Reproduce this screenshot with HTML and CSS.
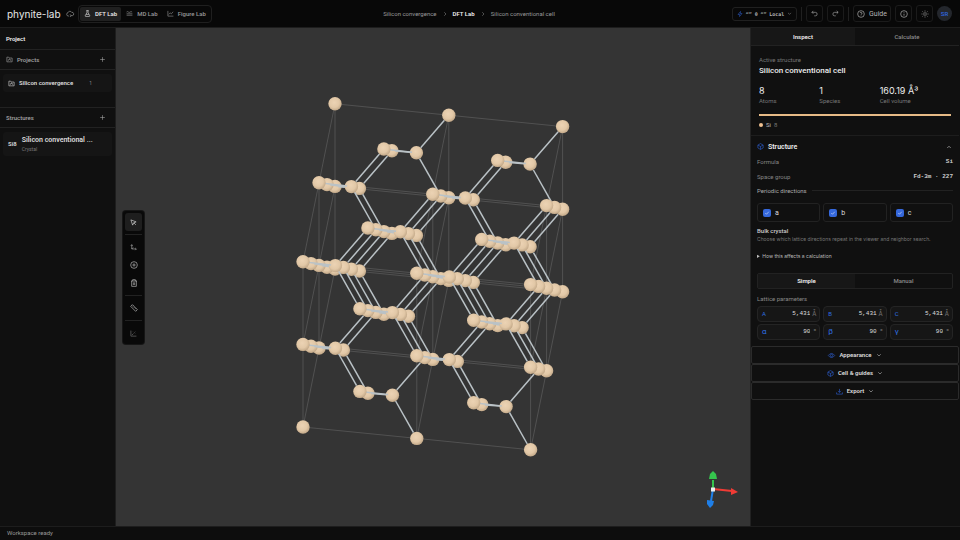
FILE: index.html
```
<!DOCTYPE html>
<html lang="en">
<head>
<meta charset="utf-8">
<title>phynite-lab</title>
<link rel="stylesheet" href="styles.css">
</head>
<body>
<svg class="defs" aria-hidden="true">
  <symbol id="folder" viewBox="0 0 24 24"><path d="M3 20V4h6l3 3h9v13zM8 16v-3l4-3 4 3v3M12 10v3"/></symbol>
  <symbol id="plus" viewBox="0 0 24 24"><path d="M12 4v16M4 12h16"/></symbol>
  <symbol id="down" viewBox="0 0 24 24"><path d="M5 9l7 7 7-7"/></symbol>
  <symbol id="up" viewBox="0 0 24 24"><path d="M5 16l7-7 7 7"/></symbol>
  <symbol id="right" viewBox="0 0 24 24"><path d="M9 5l7 7-7 7"/></symbol>
  <symbol id="cube" viewBox="0 0 24 24"><path d="M12 2l9 5v10l-9 5-9-5V7zM3 7l9 5 9-5M12 12v10"/></symbol>
  <symbol id="check" viewBox="0 0 24 24"><path d="M5 12l5 5 9-10"/></symbol>
</svg>
<div class="app">
  <header class="top">
    <div class="brand"><span class="logo">phynite-lab</span>
      <svg class="ic ic8" viewBox="0 0 24 24"><path d="M9 18H7a5 5 0 0 1-1-9.900A6 6 0 0 1 17 7a5 5 0 0 1 2 10l-5 0M12 13l3 4-3 4"/></svg>
    </div>
    <nav class="labs">
      <button class="lab on"><svg class="ic ic7" viewBox="0 0 24 24"><path d="M8 2h8M10 2v7L4 20q0 2 2 2h12q2 0 2-2L14 9V2M7 15h10"/></svg>DFT Lab</button>
      <button class="lab"><svg class="ic ic7" viewBox="0 0 24 24"><path d="M2 7q3-3 6 0t6 0 7 0M2 13h20M2 18h20"/></svg>MD Lab</button>
      <button class="lab"><svg class="ic ic7" viewBox="0 0 24 24"><path d="M3 3v18h19M6 15l5-5 4 3 6-7"/></svg>Figure Lab</button>
    </nav>
    <nav class="crumbs"><a href="#">Silicon convergence</a><svg class="ic ic6"><use href="#right"/></svg><a class="cur" href="#">DFT Lab</a><svg class="ic ic6"><use href="#right"/></svg><a href="#">Silicon conventional cell</a></nav>
    <div class="tools">
      <button class="pill"><svg class="ic ic6 blue" viewBox="0 0 24 24"><path d="M14 2L4 14h7l-1 8L20 10h-7z"/></svg><span>“” 0</span><span>“”</span><span>Local</span><svg class="ic ic5"><use href="#down"/></svg></button>
      <span class="sep"></span>
      <button class="sq" aria-label="Undo"><svg class="ic ic7" viewBox="0 0 24 24"><path d="M8 3L3 8l5 5M3 8h12a6 6 0 0 1 0 12h-4"/></svg></button>
      <button class="sq" aria-label="Redo"><svg class="ic ic7" viewBox="0 0 24 24"><path d="M16 3l5 5-5 5M21 8H9a6 6 0 0 0 0 12h4"/></svg></button>
      <span class="sep"></span>
      <button class="guide"><svg class="ic ic8" viewBox="0 0 24 24"><circle cx="12" cy="12" r="10"/><path d="M9 9a3 3 0 1 1 3 4v1M12 17v1"/></svg>Guide</button>
      <button class="sq" aria-label="About"><svg class="ic ic8" viewBox="0 0 24 24"><circle cx="12" cy="12" r="10"/><path d="M12 6v2M12 11v6"/></svg></button>
      <button class="sq" aria-label="Theme"><svg class="ic ic8 dim" viewBox="0 0 24 24"><circle cx="12" cy="12" r="4"/><path d="M12 1v4M12 19v4M1 12h4M19 12h4M4 4l3 3M17 17l3 3M4 20l3-3M17 7l3-3"/></svg></button>
      <button class="avatar">SR</button>
    </div>
  </header>

  <aside class="left">
    <h1 class="side-title">Project</h1>
    <div class="side-head"><svg class="ic ic7"><use href="#folder"/></svg><span>Projects</span><button class="add" aria-label="Add project"><svg class="ic ic7"><use href="#plus"/></svg></button></div>
    <div class="side-list projects"><a class="item" href="#"><svg class="ic ic7"><use href="#folder"/></svg><b>Silicon convergence</b><span class="count">1</span></a></div>
    <div class="side-head"><span>Structures</span><button class="add" aria-label="Add structure"><svg class="ic ic7"><use href="#plus"/></svg></button></div>
    <div class="side-list"><a class="item tall" href="#"><b>Si8</b><span class="stack"><b>Silicon conventional ...</b><small>Crystal</small></span></a></div>
  </aside>

  <main class="view">
    <svg class="scene" id="scene" viewBox="116 28 634 498" role="img" aria-label="Silicon supercell">
      <defs><radialGradient id="ball" cx=".44" cy=".4" r=".62"><stop offset="0" stop-color="#ecd3b4"/><stop offset=".6" stop-color="#e2c8a7"/><stop offset="1" stop-color="#c0a686"/></radialGradient></defs>
      <g id="cells"></g><g id="atoms"></g>
      <g class="gizmo">
        <path stroke="#35c44d" d="M713 489V480"/><path fill="#35c44d" d="M709 479l1-5 3-3 3 3 1 5z"/>
        <path stroke="#ef3b35" d="M713 489l19 2"/><path fill="#ef3b35" d="M731 488l7 4-7 3z"/>
        <path stroke="#1f7fe8" d="M713 489l-2 12"/><path fill="#1f7fe8" d="M707 500l7 1-1 4-3 3-3-4z"/>
        <path fill="#eeeeee" d="M711 487.500h4v4h-4z"/>
      </g>
    </svg>
    <div class="palette">
      <button class="tool on" aria-label="Select"><svg class="ic ic7" viewBox="0 0 24 24"><path d="M3 3l6 18 4-8 8-3zM13 13l7 7"/></svg></button>
      <hr>
      <button class="tool" aria-label="Move"><svg class="ic ic7" viewBox="0 0 24 24"><path d="M6 3v14h14M3 6l3-4 3 4M18 14l4 3-4 4M6 17l5-5"/></svg></button>
      <button class="tool" aria-label="Add atom"><svg class="ic ic8" viewBox="0 0 24 24"><circle cx="12" cy="12" r="10"/><path d="M12 7v10M7 12h10"/></svg></button>
      <button class="tool" aria-label="Delete"><svg class="ic ic8" viewBox="0 0 24 24"><path d="M3 6h18M8 6V2h8v4M5 6v16h14V6M10 10v8M14 10v8"/></svg></button>
      <hr>
      <button class="tool" aria-label="Measure"><svg class="ic ic8" viewBox="0 0 24 24"><path d="M7 2l15 15-5 5L2 7zM10 5l-2 2M14 9l-2 2M18 13l-2 2"/></svg></button>
      <hr>
      <button class="tool dim" aria-label="Plot"><svg class="ic ic7" viewBox="0 0 24 24"><path d="M3 2v19h19M7 17l5-5M15 9l3-3M18 11v1M10 6v1"/></svg></button>
    </div>
  </main>

  <aside class="right">
    <div class="tabs"><button class="on">Inspect</button><button>Calculate</button></div>
    <section class="summary">
      <p class="muted">Active structure</p>
      <h2>Silicon conventional cell</h2>
      <dl class="stats"><div><dd>8</dd><dt>Atoms</dt></div><div><dd>1</dd><dt>Species</dt></div><div><dd>160.19 Å³</dd><dt>Cell volume</dt></div></dl>
      <div class="bar"></div>
      <p class="legend"><i></i>Si <span>8</span></p>
    </section>
    <section class="structure">
      <button class="sec"><svg class="ic ic7 blue"><use href="#cube"/></svg><span>Structure</span><svg class="ic ic6"><use href="#up"/></svg></button>
      <div class="kv"><span>Formula</span><code>Si</code></div>
      <div class="kv"><span>Space group</span><code>Fd-3m · 227</code></div>
      <div class="rule">Periodic directions</div>
      <div class="trio dirs">
        <label><input type="checkbox" checked><svg class="tick"><use href="#check"/></svg>a</label>
        <label><input type="checkbox" checked><svg class="tick"><use href="#check"/></svg>b</label>
        <label><input type="checkbox" checked><svg class="tick"><use href="#check"/></svg>c</label>
      </div>
      <h3>Bulk crystal</h3>
      <p class="muted hint">Choose which lattice directions repeat in the viewer and neighbor search.</p>
      <details><summary>How this affects a calculation</summary></details>
      <div class="seg"><button class="on">Simple</button><button>Manual</button></div>
      <p class="lat">Lattice parameters</p>
      <div class="trio params">
        <label>A<input value="5,431"><i>Å</i></label><label>B<input value="5,431"><i>Å</i></label><label>C<input value="5,431"><i>Å</i></label>
        <label class="greek">α<input value="90"><i>°</i></label><label class="greek">β<input value="90"><i>°</i></label><label class="greek">γ<input value="90"><i>°</i></label>
      </div>
    </section>
    <button class="fold"><svg class="ic ic7 blue" viewBox="0 0 24 24"><path d="M1 12q5-7 11-7t11 7q-5 7-11 7T1 12z"/><circle cx="12" cy="12" r="4"/></svg>Appearance<svg class="ic ic6"><use href="#down"/></svg></button>
    <button class="fold"><svg class="ic ic7 blue"><use href="#cube"/></svg>Cell &amp; guides<svg class="ic ic6"><use href="#down"/></svg></button>
    <button class="fold"><svg class="ic ic7 blue" viewBox="0 0 24 24"><path d="M12 3v12M7 10l5 5 5-5M2 15v6h20v-6"/></svg>Export<svg class="ic ic6"><use href="#down"/></svg></button>
  </aside>
  <footer class="status">Workspace ready</footer>
</div>
<script src="scene.js"></script>
</body>
</html>
```
FILE: styles.css
```
* { box-sizing: border-box; margin: 0; padding: 0; }
body { background: #0f0f0f; color: #d6d6d6; font: 6px/8px Roboto, "Liberation Sans", sans-serif; }
button, input { font: inherit; color: inherit; background: none; border: 0; }
a { color: inherit; text-decoration: none; }
.defs { display: none; }
.app { min-height: 100vh; display: grid; grid-template: 28px 1fr 14px / 116px minmax(0, 1fr) 210px; }

.ic { fill: none; stroke: currentColor; stroke-width: 2; flex: none; overflow: visible; }
.ic5 { width: 5px; height: 5px; }
.ic6 { width: 6px; height: 6px; }
.ic7 { width: 7px; height: 7px; }
.ic8 { width: 8px; height: 8px; }
.blue { color: #2f62d9; }
.dim { color: #858585; }

.top { grid-column: 1 / -1; display: grid; grid-template-columns: 1fr auto 1fr; align-items: center; background: #080808; border-bottom: 1px solid #1d1d1d; padding: 0 8px 0 7px; }
.brand { display: flex; align-items: center; gap: 5px; grid-area: 1 / 1; color: #999; }
.logo { font: 10px/12px Inter, sans-serif; color: #e6e6e6; }
.labs { grid-area: 1 / 1; justify-self: start; margin-left: 71px; display: flex; gap: 1px; padding: 1px; border: 1px solid #1f1f1f; border-radius: 4px; }
.lab { display: flex; align-items: center; gap: 4px; height: 14px; padding: 0 4px; border-radius: 2px; color: #999; font-weight: 500; }
.lab.on { background: #202020; color: #eee; }
.crumbs { grid-area: 1 / 2; display: flex; align-items: center; gap: 5px; margin-right: 21px; color: #999; }
.crumbs .cur { color: #eee; font-weight: 600; }
.tools { grid-area: 1 / 3; justify-self: end; display: flex; align-items: center; gap: 4px; color: #b5b5b5; }
.pill { display: flex; align-items: center; justify-content: space-between; width: 65px; height: 14px; padding: 0 4px; border: 1px solid #202020; border-radius: 3px; font: 600 5px/8px "DejaVu Sans Mono", monospace; }
.sep { width: 1px; height: 14px; background: #202020; }
.sq, .guide { display: flex; align-items: center; justify-content: center; width: 17px; height: 17px; border: 1px solid #1b1b1b; border-radius: 3px; }
.guide { width: 38px; gap: 4px; font-size: 7px; }
.avatar { width: 15px; height: 15px; border-radius: 50%; background: #24272d; color: #2f62d9; font-weight: 600; }

.left { background: #101010; border-right: 1px solid #1e1e1e; }
.side-title { height: 22px; padding: 7px 6px; border-bottom: 1px solid #222; font-size: 6px; line-height: 8px; font-weight: 600; color: #eee; }
.side-head { display: flex; align-items: center; gap: 4px; height: 20px; padding: 0 9px 0 6px; border-bottom: 1px solid #222; color: #a5a5a5; font-weight: 500; }
.add { margin-left: auto; display: flex; }
.side-list { padding: 4px 3px; }
.projects { height: 38px; border-bottom: 1px solid #222; }
.item { display: flex; align-items: center; gap: 4px; height: 18px; padding: 0 20px 0 5px; border-radius: 3px; background: #151515; color: #ddd; }
.item b { font-weight: 600; }
.item.tall { height: 24px; gap: 5px; padding-right: 0; }
.stack { display: flex; flex-direction: column; white-space: nowrap; }
.stack b { font-size: 7px; line-height: 9px; }
.stack small { font-size: 5px; line-height: 8px; color: #777; }
.count { margin-left: auto; font-size: 5px; color: #888; }

.view { position: relative; background: #343434; min-width: 0; }
.scene { display: block; width: 100%; height: 100%; }
.scene .cell { stroke: #656565; stroke-width: .6; }
.scene .bond { stroke: #bac2c6; stroke-width: 1.5; }
.gizmo { stroke-width: 2; }
.palette { position: absolute; left: 7px; top: 183px; width: 21px; padding: 2px; background: #090909; border-radius: 3px; box-shadow: 0 0 0 1px #161616; }
.palette hr { border: 0; border-top: 1px solid #222; margin: 3px 0; }
.tool { display: flex; align-items: center; justify-content: center; width: 17px; height: 18px; border-radius: 3px; color: #bbb; }
.tool.on { background: #1e1e1e; color: #eee; }
.tool.dim { color: #808080; }

.right { background: #101010; border-left: 1px solid #222; padding-right: 1px; }
.tabs { display: flex; height: 18px; border-bottom: 1px solid #222; }
.tabs button, .seg button { flex: 1; color: #8b8b8b; font-weight: 500; }
.tabs .on, .seg .on { background: #171717; color: #eee; font-weight: 600; }
.muted { color: #777; }
.summary { height: 90px; padding: 10px 8px 0; border-bottom: 1px solid #1d1d1d; }
.summary h2 { font-size: 8px; line-height: 14px; font-weight: 500; color: #eee; }
.stats { display: grid; grid-template-columns: repeat(3, 1fr); column-gap: 1px; margin-top: 7px; margin-right: 12px; }
.stats div { display: flex; flex-direction: column; white-space: nowrap; }
.stats dd { font: 9px/11px Inter, sans-serif; color: #eee; }
.stats dt { color: #777; line-height: 10px; }
.bar { height: 2px; margin-top: 8px; background: #e6ba86; }
.legend { display: flex; align-items: center; gap: 3px; margin-top: 5px; color: #bbb; }
.legend i { width: 4px; height: 4px; border-radius: 50%; background: #efc090; }
.legend span { color: #777; }
.structure { padding: 3px 6px 6px; }
.sec { display: flex; align-items: center; gap: 4px; width: 100%; height: 15px; padding-right: 1px; font-size: 7px; font-weight: 600; color: #eee; }
.sec span { flex: 1; text-align: left; }
.kv { display: flex; justify-content: space-between; align-items: center; height: 15px; color: #858585; }
.kv code { font: bold 6px/8px "Liberation Mono", monospace; color: #ccc; }
.rule { display: flex; align-items: center; gap: 5px; height: 13px; color: #aaa; }
.rule::after { content: ""; flex: 1; border-top: 1px solid #222; }
.trio { display: grid; grid-template-columns: repeat(3, 1fr); gap: 2px 3px; }
.dirs { margin: 6px 0 4px; }
.dirs label { display: flex; align-items: center; gap: 4px; height: 19px; padding-left: 5px; border: 1px solid #222; border-radius: 3px; font-size: 7px; color: #ddd; }
.dirs input { appearance: none; width: 8px; height: 8px; border-radius: 2px; background: #3568dc; }
.tick { width: 6px; height: 6px; margin-left: -11px; margin-right: 1px; fill: none; stroke: #fff; stroke-width: 2; }
h3 { font-size: 6px; line-height: 9px; font-weight: 500; color: #ccc; }
.hint { font: 5px/9px Inter, sans-serif; white-space: nowrap; }
details { margin-top: 8px; }
summary { color: #bbb; font: 5px/8px Inter, sans-serif; }
.seg { display: flex; height: 16px; margin-top: 13px; border: 1px solid #222; border-radius: 2px; }
.lat { margin: 6px 0 3px; color: #888; }
.params label { display: flex; align-items: center; height: 16px; padding: 0 3px 0 4px; border: 1px solid #242424; border-radius: 4px; background: #161616; color: #2f6fe0; }
.params .greek { font-size: 8px; }
.params input { flex: 1; width: 0; min-width: 0; text-align: right; font: 6px/8px "Liberation Mono", monospace; color: #ddd; }
.params i { width: 6px; text-align: right; font: 6px/8px Inter, sans-serif; color: #777; }
.fold { display: flex; align-items: center; justify-content: center; gap: 4px; width: 100%; height: 18px; border: 1px solid #2b2b2b; border-radius: 2px; color: #ddd; font-size: 6px; font-weight: 600; }
.status { grid-column: 1 / -1; padding: 2px 7px; background: #0d0d0d; border-top: 1px solid #1d1d1d; color: #999; }
```
FILE: scene.js
```
// Lattice vectors as [screen x, screen y, depth], depth growing toward the viewer.
const A = [113.8, 11.4, 11.5], B = [0, -82.6, 81.7], C = [16, -79, -79.9];
const ORIGIN = [303, 427, 0];
const RADIUS = 6.7;
const N = 2;
const NS = "http://www.w3.org/2000/svg";

const project = p => ORIGIN.map((o, i) => o + p[0] * A[i] + p[1] * B[i] + p[2] * C[i]);

function add(parent, name, attrs) {
  const el = document.createElementNS(NS, name);
  for (const k in attrs) el.setAttribute(k, attrs[k]);
  parent.appendChild(el);
}
function line(parent, cls, p, q) {
  add(parent, "line", { class: cls, x1: p[0].toFixed(1), y1: p[1].toFixed(1), x2: q[0].toFixed(1), y2: q[1].toFixed(1) });
}

// Unit-cell grid lines
const cells = document.getElementById("cells");
for (let i = 0; i <= N; i++) for (let j = 0; j <= N; j++) {
  line(cells, "cell", project([0, i, j]), project([N, i, j]));
  line(cells, "cell", project([i, 0, j]), project([i, N, j]));
  line(cells, "cell", project([i, j, 0]), project([i, j, N]));
}

// Diamond-cubic basis, in fractional coordinates
const basis = [[0, 0, 0], [.5, .5, 0], [.5, 0, .5], [0, .5, .5],
  [.75, .25, .25], [.25, .75, .25], [.25, .25, .75], [.75, .75, .75]];
const sites = [];
for (let x = 0; x <= N; x++) for (let y = 0; y <= N; y++) for (let z = 0; z <= N; z++)
  for (const b of basis) {
    const p = [x + b[0], y + b[1], z + b[2]];
    if (p.every(v => v <= N)) sites.push(p);
  }

const items = sites.map(p => ({ z: project(p)[2], at: project(p) }));
for (let i = 0; i < sites.length; i++) for (let j = i + 1; j < sites.length; j++) {
  const d = Math.hypot(...sites[i].map((v, k) => v - sites[j][k]));
  if (d > .44) continue;
  const p = project(sites[i]), q = project(sites[j]);
  const t = RADIUS / Math.hypot(...p.map((v, k) => v - q[k]));
  const mix = s => p.map((v, k) => v + (q[k] - v) * s);
  items.push({ z: (p[2] + q[2]) / 2, from: mix(t), to: mix(1 - t) });
}
items.sort((m, n) => m.z - n.z);

const atoms = document.getElementById("atoms");
for (const it of items) {
  if (it.at) add(atoms, "circle", { cx: it.at[0].toFixed(1), cy: it.at[1].toFixed(1), r: RADIUS, fill: "url(#ball)" });
  else line(atoms, "bond", it.from, it.to);
}
```
